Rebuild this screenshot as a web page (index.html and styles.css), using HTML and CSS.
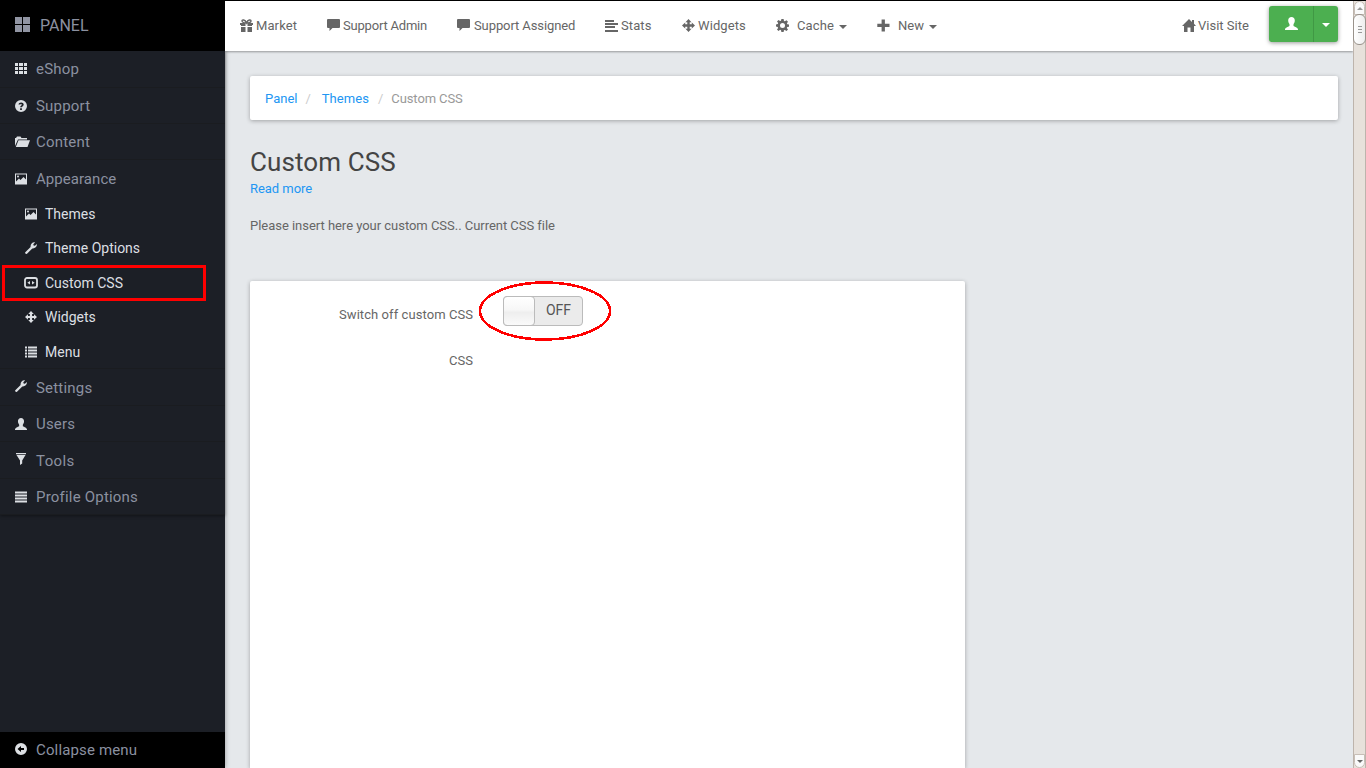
FILE: index.html
```html
<!DOCTYPE html>
<html lang="en">
<head>
<meta charset="utf-8">
<title>Custom CSS</title>
<link rel="stylesheet" href="styles.css">
</head>
<body>
<svg class="defs" aria-hidden="true">
  <symbol id="grid" viewBox="0 0 12 12"><path d="M0 0h3v3H0zM4 0h4v3H4zM9 0h3v3H9zM0 4h3v3H0zM4 4h4v3H4zM9 4h3v3H9zM0 8h3v3H0zM4 8h4v3H4zM9 8h3v3H9z"/></symbol>
  <symbol id="help" viewBox="0 0 12 12"><path fill-rule="evenodd" d="M6 0a6 6 0 1 1 0 12A6 6 0 0 1 6 0zM3.500 4.600h1.700c0-.9 1.600-.9 1.600.1 0 .8-1.700 1-1.700 2.600h1.800c0-1 1.800-1.200 1.800-2.900 0-2.700-5.200-2.700-5.200.2zM5.100 8.200V10h1.800V8.200z"/></symbol>
  <symbol id="folder" viewBox="0 0 15 12"><path d="M0 10V2h1l1-1.500h3.500l1 1.500H12v1.500H3zM3.500 4.300H15L12.500 11H.8z"/></symbol>
  <symbol id="image" viewBox="0 0 12 12"><path fill-rule="evenodd" d="M0 .5h12v11H0zM1 1.500v7l3-3 1.500 1.500L8.500 4 11 6.500v-5z"/><circle cx="3" cy="3.500" r="1"/></symbol>
  <symbol id="wrench" viewBox="0 0 12 12"><path d="M.3 10.200 5.600 5C5.200 2.300 7.400-.1 10 .4L8.300 2.200l.3 1.300 1.300.3L11.900 2c.4 2.600-2 4.800-4.600 4.400L2 11.700c-1 .8-2.500-.5-1.700-1.500z"/></symbol>
  <symbol id="code" viewBox="0 0 14 12"><rect x="1" y="1" width="12" height="9.500" rx="2" fill="none" stroke="currentColor" stroke-width="1.800"/><path d="M3.300 5.800 6 4v3.600zM10.700 5.800 8 4v3.600z"/></symbol>
  <symbol id="move" viewBox="0 0 13 13"><path d="M6.500 0 9.500 3.200H7.700v2.100h2.100V3.500l3.200 3-3.200 3V7.700H7.700v2.100h1.800L6.500 13 3.500 9.800h1.800V7.700H3.200v1.800L0 6.500l3.200-3v1.800h2.100V3.200H3.500z"/></symbol>
  <symbol id="list" viewBox="0 0 12 12"><path d="M0 .5h2v2H0zM3 .5h9v2H3zM0 3.500h2v2H0zM3 3.500h9v2H3zM0 6.500h2v2H0zM3 6.500h9v2H3zM0 9.500h2v2H0zM3 9.500h9v2H3z"/></symbol>
  <symbol id="user" viewBox="0 0 13 13"><path d="M6.500 0C8.500 0 9.800 1.400 9.800 3.500c0 1.900-.8 2.800-1.300 3.800v1.600c1.500.9 4.500 1.600 4.500 3.600v.5H0v-.5c0-2 3-2.700 4.500-3.600V7.300c-.5-1-1.300-1.900-1.300-3.800C3.200 1.400 4.500 0 6.500 0z"/></symbol>
  <symbol id="filter" viewBox="0 0 12 12"><path d="M1 0h10v1.200H1zM1.500 2h9L7.200 7.500v3L5 12V7.500z"/></symbol>
  <symbol id="lines" viewBox="0 0 12 12"><path d="M0 .5h12v2H0zM0 3.500h12v2H0zM0 6.500h12v2H0zM0 9.500h12v2H0z"/></symbol>
  <symbol id="back" viewBox="0 0 12 12"><path fill-rule="evenodd" d="M6 0a6 6 0 1 1 0 12A6 6 0 0 1 6 0zM2.500 6 6 9V7h3V5H6V3z"/></symbol>
  <symbol id="gift" viewBox="0 0 13 13"><path d="M0 4h5.500v3H1v-1H0zM7.500 4H13v2h-1v1H7.500zM1 8h4.500v5H1zM7.500 8H12v5H7.500z"/><path d="M6.500 4C5 4 2 3.500 2 2s3-1.700 4.500 2C8 .3 11 .5 11 2S8 4 6.500 4z" fill="none" stroke="currentColor" stroke-width="1.400"/></symbol>
  <symbol id="comment" viewBox="0 0 13 13"><path d="M1 0h11q1 0 1 1v7q0 1-1 1H5.500L2.500 12V9H1Q0 9 0 8V1q0-1 1-1z"/></symbol>
  <symbol id="stats" viewBox="0 0 13 13"><path d="M0 1h9v2H0zM0 4h13v2H0zM0 7h10v2H0zM0 11h13v2H0z"/></symbol>
  <symbol id="gear" viewBox="0 0 13 13"><path fill-rule="evenodd" d="M5.400 0h2.200l.4 1.900.9.400L10.500 1.200l1.500 1.500-1.100 1.600.4.900 1.700.3v2.200l-1.800.4-.4.900L12 10.500 10.500 12 8.900 10.900l-.9.400L7.600 13H5.400L5 11.200l-.9-.4L2.500 12 1 10.500l1.100-1.600-.4-.9L0 7.600V5.400L1.800 5l.4-.9L1 2.500 2.500 1l1.600 1.100.9-.4zM6.500 4A2.500 2.500 0 1 0 6.500 9 2.500 2.500 0 0 0 6.500 4z"/></symbol>
  <symbol id="plus" viewBox="0 0 13 13"><path d="M4.600.5h3.300v4.300H12.500v3.300H7.900v4.400H4.600V8.100H.3V4.800h4.300z"/></symbol>
  <symbol id="home" viewBox="0 0 14 13"><path d="M7 0 10 2.900V1h2v3.800L14 7h-2v6H8.500V8.500h-3V13H2V7H0z"/></symbol>
</svg>
<div class="app">
  <aside class="sidebar">
    <div class="brand"><i class="logo"></i><span>PANEL</span></div>
    <ul class="menu">
      <li class="item"><svg><use href="#grid"/></svg><span>eShop</span></li>
      <li class="item"><svg><use href="#help"/></svg><span>Support</span></li>
      <li class="item"><svg class="wide"><use href="#folder"/></svg><span>Content</span></li>
      <li class="item open"><svg><use href="#image"/></svg><span>Appearance</span></li>
      <li>
        <ul class="submenu">
          <li><svg><use href="#image"/></svg><span>Themes</span></li>
          <li class="lift"><svg><use href="#wrench"/></svg><span>Theme Options</span></li>
          <li class="marked"><svg class="code"><use href="#code"/></svg><span>Custom CSS</span></li>
          <li class="lift"><svg><use href="#move"/></svg><span>Widgets</span></li>
          <li><svg><use href="#list"/></svg><span>Menu</span></li>
        </ul>
      </li>
      <li class="item high"><svg><use href="#wrench"/></svg><span>Settings</span></li>
      <li class="item"><svg><use href="#user"/></svg><span>Users</span></li>
      <li class="item high tools"><svg><use href="#filter"/></svg><span>Tools</span></li>
      <li class="item"><svg><use href="#lines"/></svg><span>Profile Options</span></li>
    </ul>
    <div class="collapse"><svg><use href="#back"/></svg><span>Collapse menu</span></div>
  </aside>
  <div class="page">
    <header class="topbar">
      <nav class="nav">
        <a class="n-market"><svg><use href="#gift"/></svg>Market</a>
        <a class="n-admin"><svg><use href="#comment"/></svg>Support Admin</a>
        <a class="n-assigned"><svg><use href="#comment"/></svg>Support Assigned</a>
        <a class="n-stats"><svg><use href="#stats"/></svg>Stats</a>
        <a class="n-widgets"><svg><use href="#move"/></svg>Widgets</a>
        <a class="n-cache drop"><svg><use href="#gear"/></svg>Cache<b class="caret"></b></a>
        <a class="n-new drop"><svg><use href="#plus"/></svg>New<b class="caret"></b></a>
      </nav>
      <div class="right">
        <a class="visit"><svg><use href="#home"/></svg>Visit Site</a>
        <div class="account"><button class="user"><svg><use href="#user"/></svg></button><button class="toggle"><b class="caret"></b></button></div>
      </div>
    </header>
    <main class="content">
      <div class="crumbs"><a>Panel</a><i>/</i><a class="c-themes">Themes</a><i class="last">/</i><span>Custom CSS</span></div>
      <h1>Custom CSS</h1>
      <a class="more">Read more</a>
      <p class="intro">Please insert here your custom CSS.. Current CSS file</p>
      <section class="card">
        <div class="field">
          <label>Switch off custom CSS</label>
          <div class="switch"><i class="knob"></i><span>OFF</span>
            <svg class="ring" viewBox="0 0 134 60"><ellipse cx="67" cy="30" rx="65" ry="28.500"/></svg>
          </div>
        </div>
        <div class="field"><label>CSS</label></div>
      </section>
    </main>
  </div>
  <div class="scroll"><div class="cap up"><b></b></div><div class="thumb"><i></i><i></i><i></i></div><div class="cap down"><b></b></div></div>
</div>
</body>
</html>
```
FILE: styles.css
```css
* { box-sizing: border-box; }
html, body { margin: 0; height: 768px; overflow: hidden; }
body { font: 13px/20px Roboto, sans-serif; color: #666; background: #e5e8eb; }
ul { list-style: none; margin: 0; padding: 0; }
svg { width: 13px; height: 13px; fill: currentColor; flex: none; }
.defs { position: absolute; width: 0; height: 0; }
.app { display: flex; height: 768px; border-top: 1px solid #000; }

.sidebar { width: 225px; flex: none; display: flex; flex-direction: column; background: #1c1f26; color: #8b91a0; font-size: 15px; letter-spacing: .2px; box-shadow: 0 0 5px rgba(0,0,0,.35); }
.brand { height: 50px; background: #000; display: flex; align-items: center; padding-left: 15px; font-size: 16px; letter-spacing: 0; }
.logo { width: 15px; height: 15px; margin: -3px 10px 0 0; background: linear-gradient(#000,#000) 7px 0/1px 15px no-repeat, linear-gradient(#000,#000) 0 7px/15px 1px no-repeat, #9195a3; }
.menu { padding-top: .3px; box-shadow: 0 1px 3px rgba(0,0,0,.4); }
.item, .collapse { display: flex; align-items: center; padding-left: 15px; }
.item { height: 36.4px; box-shadow: inset 0 -1px #1a1c20; }
.item.open { box-shadow: none; letter-spacing: .05px; }
.item svg, .collapse svg { width: 12px; height: 12px; margin-right: 9px; color: #dcdfe3; }
.item .wide { width: 15px; margin-right: 6px; }
.item.high svg { margin-top: -4px; }
.item.tools { padding-top: 1px; letter-spacing: .4px; }
.submenu { font-size: 14px; letter-spacing: 0; color: #dcdfe3; box-shadow: inset 0 -1px #1a1c20; }
.submenu li { height: 34.5px; display: flex; align-items: center; padding-left: 25px; position: relative; }
.submenu .lift { padding-bottom: 1px; }
.submenu svg { width: 12px; height: 12px; margin-right: 8px; }
.submenu .code { width: 14px; margin: 0 7px 0 -1px; }
.marked::after { content: ""; box-sizing: border-box; position: absolute; left: 2px; top: -1px; width: 204px; height: 36px; border: 3px solid #f00; }
.collapse { margin-top: auto; height: 36px; background: #000; letter-spacing: .15px; }
.collapse svg { margin-top: -2px; }

.page { flex: 1; min-width: 0; display: flex; flex-direction: column; }
.topbar { height: 50px; flex: none; background: #fff; display: flex; justify-content: space-between; box-shadow: 0 1px 2px rgba(0,0,0,.35); padding: 0 15px; }
.nav { display: flex; gap: 30px; letter-spacing: .1px; }
.nav a, .visit { display: flex; align-items: center; white-space: nowrap; }
.nav svg { margin-right: 3px; margin-top: -2px; }
.n-market { width: 57px; }
.n-admin { width: 100px; letter-spacing: -.2px; }
.n-assigned { width: 118px; letter-spacing: -.1px; }
.n-assigned svg { margin-right: 4px; }
.n-stats { width: 47px; }
.n-widgets { width: 64px; }
.n-cache { width: 71px; }
.n-new { width: 60px; }
.nav .drop svg { margin-right: 8px; }
.caret { width: 0; height: 0; border: 4px solid transparent; border-top-color: currentColor; border-bottom: 0; }
.nav .caret { margin: 2px 0 0 5px; }
.right { display: flex; align-items: center; gap: 20px; }
.visit { width: 67px; }
.visit svg { width: 14px; margin: -2px 2px 0 0; }
.account { height: 36px; display: flex; margin-top: -4px; border-radius: 3px; background: #4caf50; box-shadow: 0 1px 4px rgba(0,0,0,.4); }
.account button { border: 0; background: none; color: #fff; padding: 0; display: flex; align-items: center; justify-content: center; }
.user { width: 44px; }
.user svg { margin-top: -1px; }
.account .toggle { width: 25px; border-left: 1px solid #409844; }
.toggle .caret { margin-top: 2px; }

.content { flex: 1; padding: 25px 15px 0 25px; display: flex; flex-direction: column; align-items: flex-start; }
.crumbs { align-self: stretch; height: 44px; background: #fff; border-radius: 2px; box-shadow: 0 1px 4px rgba(0,0,0,.3); display: flex; align-items: center; padding: 2px 0 0 15px; color: #999; }
.crumbs a, .more { color: #2196f3; }
.more { letter-spacing: -.05px; }
.crumbs .c-themes { letter-spacing: .05px; }
.crumbs span { letter-spacing: -.1px; }
.crumbs i { font-style: normal; color: #ccc; margin: 0 11px 0 8px; }
.crumbs .last { margin: 0 8px 0 9px; }
h1 { font-size: 26px; line-height: 30px; font-weight: 400; letter-spacing: .1px; color: #444; margin: 27px 0 2px; }
.intro { margin: 17px 0 0; letter-spacing: -.03px; }
.card { width: 715px; flex: 1; margin-top: 45px; background: #fff; border-radius: 2px 2px 0 0; box-shadow: 0 1px 4px rgba(0,0,0,.3); padding-top: 15px; }
.field { height: 48px; display: flex; }
.field label { width: 223px; text-align: right; margin-right: 30px; padding-top: 9px; letter-spacing: .07px; }
.field + .field label { padding-top: 7px; }
.switch { position: relative; width: 80px; height: 30px; border: 1px solid #bbb; border-radius: 4px; background: #ebebeb; display: flex; color: #555; font-size: 14px; }
.knob { width: 32px; height: 30px; margin: -1px 0 0 -1px; border: 1px solid #bbb; border-radius: 4px; background: linear-gradient(#fff, #f7f7f7 45%, #eee 55%, #fafafa); }
.switch span { flex: 1; text-align: center; line-height: 27px; }
.ring { position: absolute; left: -26px; top: -16px; width: 134px; height: 60px; fill: none; stroke: #f00; stroke-width: 2.600; shape-rendering: crispEdges; }

.scroll { width: 13px; flex: none; background: #e7e1db; border: 1px solid #bdb4ac; border-width: 0 1px; display: flex; flex-direction: column; }
.cap { height: 14px; background: #fafafa; display: flex; align-items: center; justify-content: center; border: 1px solid #c7beb6; }
.up { border-radius: 6px 6px 0 0; }
.cap b { border: 3px solid transparent; border-top: 0; border-bottom-color: #999; }
.thumb { height: 31px; margin: -1px -1px 0; border: 1px solid #99928b; border-radius: 6px; background: linear-gradient(90deg,#fff,#eee); display: flex; flex-direction: column; align-items: center; justify-content: center; gap: 2px; }
.thumb i { width: 4px; height: 1px; background: #999; }
.down { margin-top: auto; border-radius: 0 0 6px 6px; }
.down b { transform: rotate(180deg); border-bottom-color: #666; }
```
